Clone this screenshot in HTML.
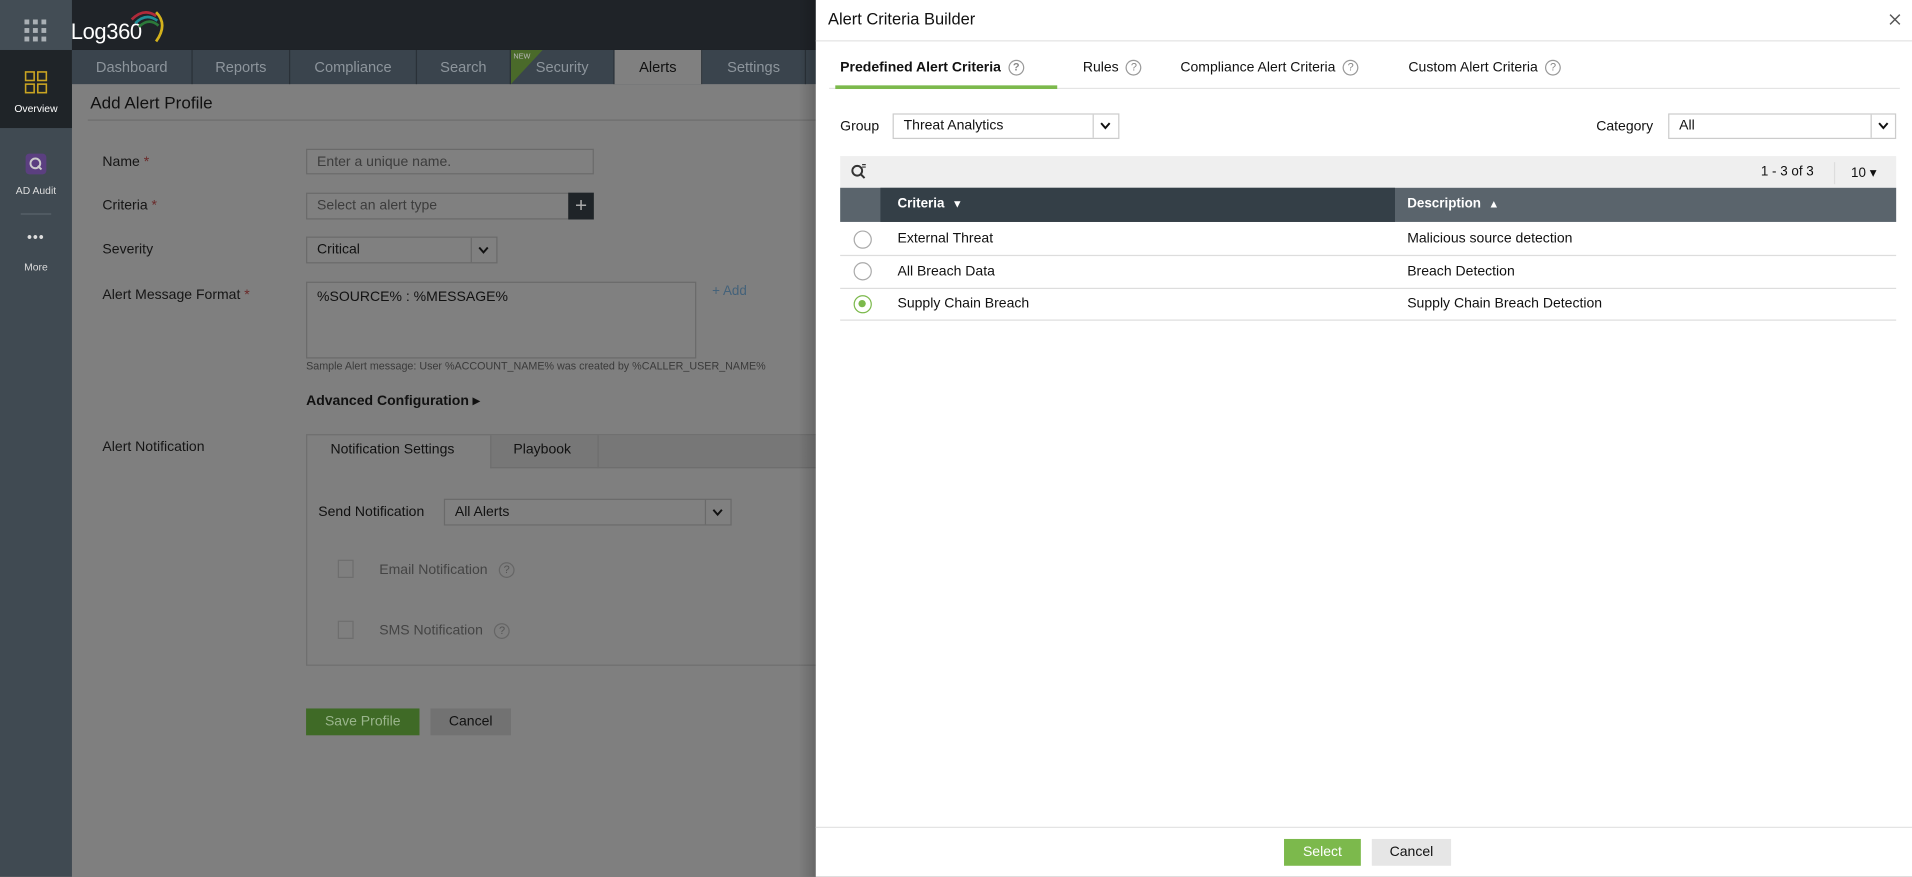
<!DOCTYPE html>
<html><head><meta charset="utf-8"><style>
*{box-sizing:border-box;margin:0;padding:0}
html,body{width:1912px;height:877px;overflow:hidden;background:#7f7f7f}
#w{width:1568px;height:719px;transform:scale(1.2194);transform-origin:0 0;position:relative;font-family:"Liberation Sans",sans-serif;font-size:11.5px;color:#111}
.a{position:absolute}
.inp{position:absolute;border:1px solid #6a6a6a;background:#808080;color:#3c3c3c;padding:0 8px;line-height:20px;font-size:11.5px}
.tab{position:absolute;top:41px;height:28px;line-height:28px;color:#8d959c;font-size:12px;text-align:center;border-right:1px solid #2a3138}
.lbl{position:absolute;left:84px;font-size:11.5px;color:#151515}
.req{color:#6b2a2a}
.q{display:inline-block;width:13px;height:13px;border:1px solid #999;border-radius:50%;font-size:9px;line-height:11px;text-align:center;color:#888;vertical-align:middle;margin-left:6px}
.rd{position:absolute;left:700px;width:15px;height:15px;border:1.5px solid #aaa;border-radius:50%}
.row{position:absolute;left:689px;width:866px;height:27px;border-bottom:1px solid #ddd;font-size:11.5px;line-height:26px}
.chev{position:absolute;text-align:center}
</style></head><body><div id="w">
<!-- sidebar -->
<div class="a" style="left:0;top:0;width:59px;height:719px;background:#404a52"></div>
<div class="a" style="left:0;top:0;width:59px;height:41px;background:#434d55"></div>
<svg class="a" style="left:20px;top:16px" width="18" height="18"><g fill="#aab0b5"><rect x="0" y="0" width="4" height="4"/><rect x="7" y="0" width="4" height="4"/><rect x="14" y="0" width="4" height="4"/><rect x="0" y="7" width="4" height="4"/><rect x="7" y="7" width="4" height="4"/><rect x="14" y="7" width="4" height="4"/><rect x="0" y="14" width="4" height="4"/><rect x="7" y="14" width="4" height="4"/><rect x="14" y="14" width="4" height="4"/></g></svg>
<div class="a" style="left:0;top:41px;width:59px;height:64px;background:#1f2428"></div>
<svg class="a" style="left:20px;top:58px" width="19" height="19" fill="none" stroke="#c9a422" stroke-width="1.3"><rect x="1" y="1" width="7" height="7"/><rect x="11" y="1" width="7" height="7"/><rect x="1" y="11" width="7" height="7"/><rect x="11" y="11" width="7" height="7"/></svg>
<div class="a" style="left:0;top:84px;width:59px;text-align:center;color:#fff;font-size:8.5px">Overview</div>
<div class="a" style="left:21px;top:126px;width:17px;height:17px;background:#5b3f80;border-radius:3px"></div>
<svg class="a" style="left:23px;top:128px" width="13" height="13" fill="none" stroke="#ccc" stroke-width="1.6"><circle cx="6" cy="6" r="4"/><path d="M8 8l3 3"/></svg>
<div class="a" style="left:0;top:151px;width:59px;text-align:center;color:#ddd;font-size:8.5px">AD Audit</div>
<div class="a" style="left:17px;top:175px;width:25px;height:1px;background:#5a646c"></div>
<div class="a" style="left:0;top:189px;width:59px;text-align:center;color:#ddd;font-size:11px;font-weight:bold;letter-spacing:1px">•••</div>
<div class="a" style="left:0;top:214px;width:59px;text-align:center;color:#ddd;font-size:8.5px">More</div>
<!-- top -->
<div class="a" style="left:59px;top:0;width:612px;height:41px;background:#1f2328"></div>
<div class="a" style="left:58px;top:16px;color:#fff;font-size:18px;letter-spacing:-.3px">Log360</div>
<svg class="a" style="left:104px;top:6px" width="32" height="30" fill="none" stroke-width="2.2"><path d="M4 10 Q14 0 24 7" stroke="#b02a3a"/><path d="M7 13 Q16 4 25 11" stroke="#1f8f96"/><path d="M10 16 Q18 8 26 15" stroke="#2c7a3a"/><path d="M24 4 Q34 14 24 28" stroke="#d4b21c"/></svg>
<div class="a" style="left:59px;top:41px;width:612px;height:28px;background:#3a444d"></div>
<div class="tab" style="left:59px;width:99px">Dashboard</div>
<div class="tab" style="left:158px;width:80px">Reports</div>
<div class="tab" style="left:238px;width:104px">Compliance</div>
<div class="tab" style="left:342px;width:77px">Search</div>
<div class="tab" style="left:419px;width:85px">Security</div>
<svg class="a" style="left:419px;top:41px" width="26" height="28"><path d="M0 0H26L0 28Z" fill="#4a6a2a"/><text x="2" y="7" font-size="6" fill="#bbb" font-family="Liberation Sans">NEW</text></svg>
<div class="tab" style="left:504px;width:72px;background:#808080;color:#111">Alerts</div>
<div class="tab" style="left:576px;width:85px">Settings</div>
<div class="a" style="left:74px;top:76px;font-size:14px;color:#111">Add Alert Profile</div>
<div class="a" style="left:72px;top:98px;width:600px;height:1px;background:#6e6e6e"></div>
<div class="lbl" style="top:127px">Name <span class="req">*</span></div>
<div class="inp" style="left:251px;top:122px;width:236px;height:21px">Enter a unique name.</div>
<div class="lbl" style="top:163px">Criteria <span class="req">*</span></div>
<div class="inp" style="left:251px;top:158px;width:216px;height:22px">Select an alert type</div>
<div class="a" style="left:466px;top:158px;width:21px;height:22px;background:#1f2428;color:#aaa;text-align:center;font-size:17px;line-height:22px">+</div>
<div class="lbl" style="top:199px">Severity</div>
<div class="inp" style="left:251px;top:194px;width:157px;height:22px;color:#111">Critical</div>
<div class="a" style="left:386px;top:195px;width:21px;height:20px;border-left:1px solid #6a6a6a"></div>
<svg class="a" style="left:392px;top:201px" width="9" height="8" fill="none" stroke="#111" stroke-width="1.6"><path d="M1 2l3.5 4 3.5-4"/></svg>
<div class="lbl" style="top:236px">Alert Message Format <span class="req">*</span></div>
<div class="inp" style="left:251px;top:231px;width:320px;height:63px;color:#111;padding-top:2px">%SOURCE% : %MESSAGE%</div>
<div class="a" style="left:584px;top:233px;color:#44627a;font-size:11px">+ Add</div>
<div class="a" style="left:251px;top:295px;font-size:8.8px;color:#3a3a3a">Sample Alert message: User %ACCOUNT_NAME% was created by %CALLER_USER_NAME%</div>
<div class="a" style="left:251px;top:321px;font-weight:bold;font-size:11.5px">Advanced Configuration &#9656;</div>
<div class="lbl" style="top:361px">Alert Notification</div>
<div class="a" style="left:251px;top:356px;width:430px;height:190px;border:1px solid #6e6e6e"></div>
<div class="a" style="left:402px;top:357px;width:280px;height:27px;background:#777;border-bottom:1px solid #6e6e6e;border-left:1px solid #6e6e6e"></div>
<div class="a" style="left:490px;top:357px;width:1px;height:27px;background:#6e6e6e"></div>
<div class="a" style="left:271px;top:363px">Notification Settings</div>
<div class="a" style="left:421px;top:363px">Playbook</div>
<div class="a" style="left:261px;top:414px">Send Notification</div>
<div class="inp" style="left:364px;top:409px;width:236px;height:22px;color:#111">All Alerts</div>
<div class="a" style="left:578px;top:410px;width:21px;height:20px;border-left:1px solid #6a6a6a"></div>
<svg class="a" style="left:584px;top:416px" width="9" height="8" fill="none" stroke="#111" stroke-width="1.6"><path d="M1 2l3.5 4 3.5-4"/></svg>
<div class="a" style="left:277px;top:459px;width:13px;height:15px;border:1px solid #6e6e6e"></div>
<div class="a" style="left:311px;top:461px;color:#444">Email Notification <span class="q" style="border-color:#666;color:#555">?</span></div>
<div class="a" style="left:277px;top:509px;width:13px;height:15px;border:1px solid #6e6e6e"></div>
<div class="a" style="left:311px;top:511px;color:#444">SMS Notification <span class="q" style="border-color:#666;color:#555">?</span></div>
<div class="a" style="left:251px;top:581px;width:93px;height:22px;background:#3f6a26;color:#9ab58c;text-align:center;line-height:22px">Save Profile</div>
<div class="a" style="left:353px;top:581px;width:66px;height:22px;background:#727272;color:#111;text-align:center;line-height:22px">Cancel</div>
<div class="a" style="left:655px;top:0;width:14px;height:719px;background:linear-gradient(90deg,rgba(0,0,0,0),rgba(0,0,0,.18))"></div>
<!-- panel -->
<div class="a" style="left:669px;top:0;width:899px;height:719px;background:#fff"></div>
<div class="a" style="left:679px;top:8px;font-size:13.5px;color:#111">Alert Criteria Builder</div>
<svg class="a" style="left:1549px;top:11px" width="10" height="10" stroke="#555" stroke-width="1.2"><path d="M1 1l8 8M9 1l-8 8"/></svg>
<div class="a" style="left:669px;top:33px;width:899px;height:1px;background:#e4e4e4"></div>
<div class="a" style="left:689px;top:49px;font-weight:bold">Predefined Alert Criteria<span class="q">?</span></div>
<div class="a" style="left:888px;top:49px">Rules<span class="q">?</span></div>
<div class="a" style="left:968px;top:49px">Compliance Alert Criteria<span class="q">?</span></div>
<div class="a" style="left:1155px;top:49px">Custom Alert Criteria<span class="q">?</span></div>
<div class="a" style="left:680px;top:72px;width:878px;height:1px;background:#e4e4e4"></div>
<div class="a" style="left:685px;top:70px;width:182px;height:3px;background:#7cb94c"></div>
<div class="a" style="left:689px;top:98px">Group</div>
<div class="a" style="left:732px;top:93px;width:186px;height:21px;border:1px solid #ccc;padding-left:8px;line-height:19px">Threat Analytics</div>
<div class="a" style="left:896px;top:94px;width:21px;height:19px;border-left:1px solid #ccc"></div>
<svg class="a" style="left:902px;top:99px" width="9" height="8" fill="none" stroke="#111" stroke-width="1.6"><path d="M1 2l3.5 4 3.5-4"/></svg>
<div class="a" style="left:1309px;top:98px">Category</div>
<div class="a" style="left:1368px;top:93px;width:187px;height:21px;border:1px solid #ccc;padding-left:8px;line-height:19px">All</div>
<div class="a" style="left:1534px;top:94px;width:20px;height:19px;border-left:1px solid #ccc"></div>
<svg class="a" style="left:1540px;top:99px" width="9" height="8" fill="none" stroke="#111" stroke-width="1.6"><path d="M1 2l3.5 4 3.5-4"/></svg>
<div class="a" style="left:689px;top:128px;width:866px;height:26px;background:#efefef"></div>
<svg class="a" style="left:697px;top:134px" width="14" height="14" fill="none" stroke="#333" stroke-width="1.6"><circle cx="6" cy="6" r="4"/><path d="M9 9l3 3"/><path d="M10 1h3M10 3h3" stroke-width="1"/></svg>
<div class="a" style="left:1444px;top:135px;font-size:11px">1 - 3 of 3</div>
<div class="a" style="left:1504px;top:133px;width:1px;height:18px;background:#ddd"></div>
<div class="a" style="left:1518px;top:135px;font-size:11px">10 ▾</div>
<div class="a" style="left:689px;top:154px;width:866px;height:28px;background:#5a646c"></div>
<div class="a" style="left:722px;top:154px;width:422px;height:28px;background:#343f47"></div>
<div class="a" style="left:736px;top:161px;color:#fff;font-weight:bold;font-size:11px">Criteria &nbsp;<span style="font-size:9px">▼</span></div>
<div class="a" style="left:1154px;top:161px;color:#fff;font-weight:bold;font-size:11px">Description &nbsp;<span style="font-size:9px">▲</span></div>
<div class="row" style="top:183px"><span class="a" style="left:47px">External Threat</span><span class="a" style="left:465px">Malicious source detection</span></div>
<div class="row" style="top:210px"><span class="a" style="left:47px">All Breach Data</span><span class="a" style="left:465px">Breach Detection</span></div>
<div class="row" style="top:236px"><span class="a" style="left:47px">Supply Chain Breach</span><span class="a" style="left:465px">Supply Chain Breach Detection</span></div>
<div class="rd" style="top:189px"></div>
<div class="rd" style="top:215px"></div>
<div class="rd" style="top:242px;border-color:#7cb94c"><div style="width:6px;height:6px;border-radius:50%;background:#7cb94c;margin:3px"></div></div>
<div class="a" style="left:669px;top:678px;width:899px;height:1px;background:#e4e4e4"></div>
<div class="a" style="left:1053px;top:688px;width:63px;height:22px;background:#7cb94c;color:#fff;text-align:center;line-height:22px">Select</div>
<div class="a" style="left:1125px;top:688px;width:65px;height:22px;background:#e6e6e6;color:#111;text-align:center;line-height:22px">Cancel</div>
</div></body></html>
